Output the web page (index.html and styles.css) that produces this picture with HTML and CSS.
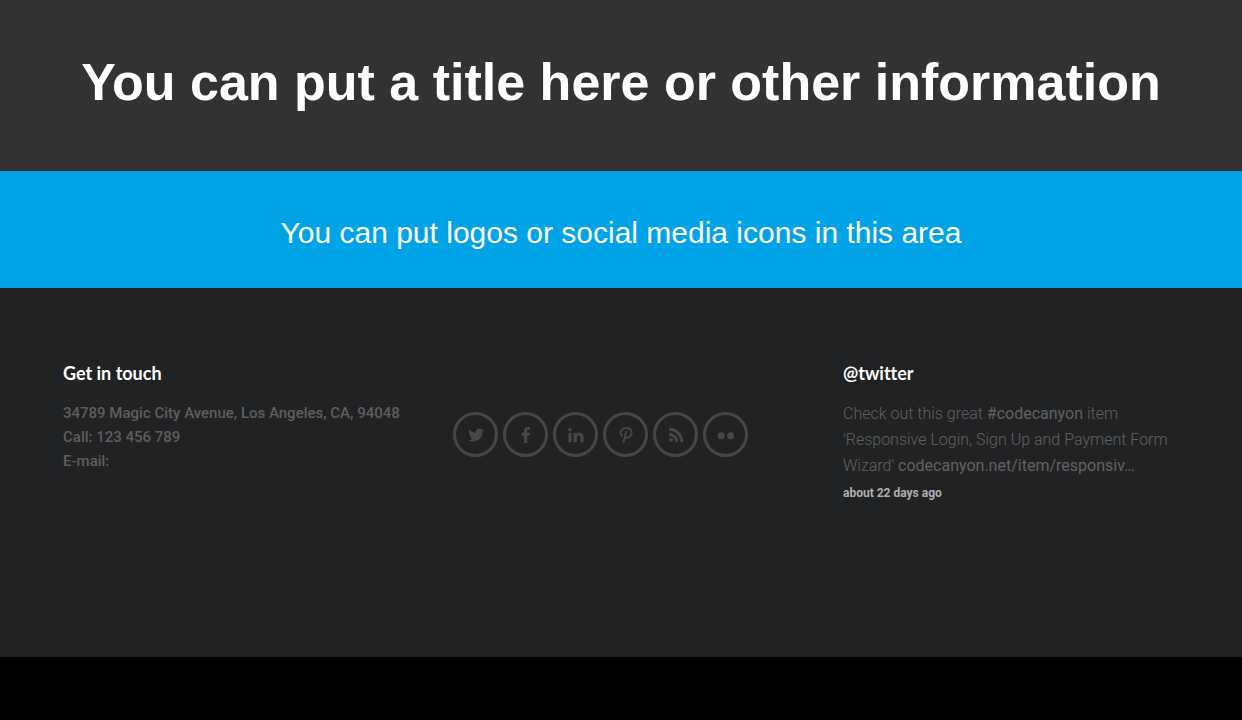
FILE: index.html
```html
<!DOCTYPE html>
<html lang="en">
<head>
  <meta charset="UTF-8" />
  <meta name="viewport" content="width=device-width, initial-scale=1" />
  <title>Get in touch</title>
  <link rel="stylesheet" href="styles.css">
</head>
<body>
  <header class="title-bar">
    <h1>You can put a title here or other information</h1>
  </header>

  <section class="logo-bar">
    <p>You can put logos or social media icons in this area</p>
  </section>

  <footer class="footer">
    <div class="contact">
      <h2>Get in touch</h2>
      <address>
        34789 Magic City Avenue, Los Angeles, CA, 94048<br>
        Call: 123 456 789<br>
        E-mail:
      </address>
    </div>

    <nav class="social" aria-label="Social media">
      <a href="#" aria-label="Twitter">
        <svg viewBox="0 0 24 24"><path d="M24 4.600a10 10 0 0 1-2.800.8 5 5 0 0 0 2.100-2.700 10 10 0 0 1-3.100 1.200 4.900 4.900 0 0 0-8.400 4.500A14 14 0 0 1 1.700 3.200a4.900 4.900 0 0 0 1.500 6.500 5 5 0 0 1-2.200-.6 4.900 4.900 0 0 0 3.900 4.900 5 5 0 0 1-2.200.1 4.900 4.900 0 0 0 4.600 3.400A9.900 9.900 0 0 1 0 19.500a14 14 0 0 0 21.500-12.400A10 10 0 0 0 24 4.600z"/></svg>
      </a>
      <a href="#" aria-label="Facebook">
        <svg viewBox="0 0 24 24"><path d="M9 24V13H5.500V8.800H9V6c0-4 2-6 5.700-6H18v4h-2.300c-1.400 0-1.900.6-1.900 2v2.800H18l-.6 4.200h-3.600v11z"/></svg>
      </a>
      <a href="#" aria-label="LinkedIn">
        <svg viewBox="0 0 24 24"><circle cx="3" cy="4" r="2.800"/><path d="M.6 9h4.800v14H.6zM8.500 9h4.600v2c.9-1.500 2.500-2.300 4.600-2.300 4.300 0 5.700 2.500 5.700 6.500V23h-4.800v-7c0-2-.5-3.300-2.400-3.300-2 0-2.900 1.400-2.900 3.400V23H8.500z"/></svg>
      </a>
      <a href="#" aria-label="Pinterest">
        <svg class="outlined" viewBox="0 0 24 24"><path d="M7 14C3.500 12 2.800 7.500 5.500 4.500c3.500-4 11.500-4 14 .5 2 4-.5 11-5.500 11-2 0-3-1-3.300-2.200M12.500 6.500 8 24"/></svg>
      </a>
      <a href="#" aria-label="RSS">
        <svg viewBox="0 0 24 24"><circle cx="4.500" cy="19.500" r="3"/><path d="M1.500 1v4.500A17 17 0 0 1 18.500 22.500H23A21.500 21.500 0 0 0 1.500 1zm0 7.500V13a9.500 9.500 0 0 1 9.500 9.500h4.500a14 14 0 0 0-14-14z"/></svg>
      </a>
      <a href="#" aria-label="Flickr">
        <svg viewBox="0 0 24 24"><circle cx="5" cy="13" r="5.300"/><circle cx="19" cy="13" r="5.300"/></svg>
      </a>
    </nav>

    <div class="twitter">
      <h2>@twitter</h2>
      <p>Check out this great <a href="#">#codecanyon</a> item 'Responsive Login, Sign Up and Payment Form Wizard' <a href="#">codecanyon.net/item/responsiv…</a></p>
      <time>about 22 days ago</time>
    </div>
  </footer>
</body>
</html>
```
FILE: styles.css
```css
* {
  box-sizing: border-box;
}

body {
  margin: 0;
  background: #000;
  color: #fff;
  font-family: Roboto, sans-serif;
}

.title-bar {
  padding: 50px 20px 57px;
  background: #333132;
  text-align: center;
}

h1 {
  margin: 0;
  font: bold 52px/64px "Arial Rounded MT Bold", "Liberation Sans", Arial, sans-serif;
}

.logo-bar {
  padding: 42px 20px 35px;
  background: #00a4e6;
  text-align: center;
}

.logo-bar p {
  margin: 0;
  font: 30px/40px "Liberation Sans", Arial, sans-serif;
}

.footer {
  display: grid;
  grid-template-columns: repeat(3, 1fr);
  gap: 30px;
  min-height: 369px;
  padding: 73px 39px 60px 63px;
  background: #212224;
}

h2 {
  margin: 0 0 16px;
  font: bold 18px/24px Lato, sans-serif;
  font-variant-ligatures: none;
}

address {
  color: #5e5e5e;
  font-size: 15px;
  font-style: normal;
  font-weight: 500;
  line-height: 24px;
}

.social {
  display: flex;
  gap: 5px;
  padding-top: 51px;
}

.social a {
  display: flex;
  align-items: center;
  justify-content: center;
  width: 45px;
  height: 45px;
  border: 3px solid #464748;
  border-radius: 50%;
}

.social svg {
  width: 16px;
  height: 16px;
  fill: #464748;
}

.social .outlined {
  fill: none;
  stroke: #464748;
  stroke-width: 3;
}

.twitter {
  padding-right: 28px;
}

.twitter p {
  margin: 0;
  color: #626262;
  font-size: 16px;
  font-weight: 300;
  line-height: 26px;
}

.twitter a {
  color: #626262;
  font-weight: 400;
  text-decoration: none;
}

time {
  display: block;
  color: #b0b0b0;
  font-size: 12px;
  font-weight: bold;
  line-height: 28px;
}
```
